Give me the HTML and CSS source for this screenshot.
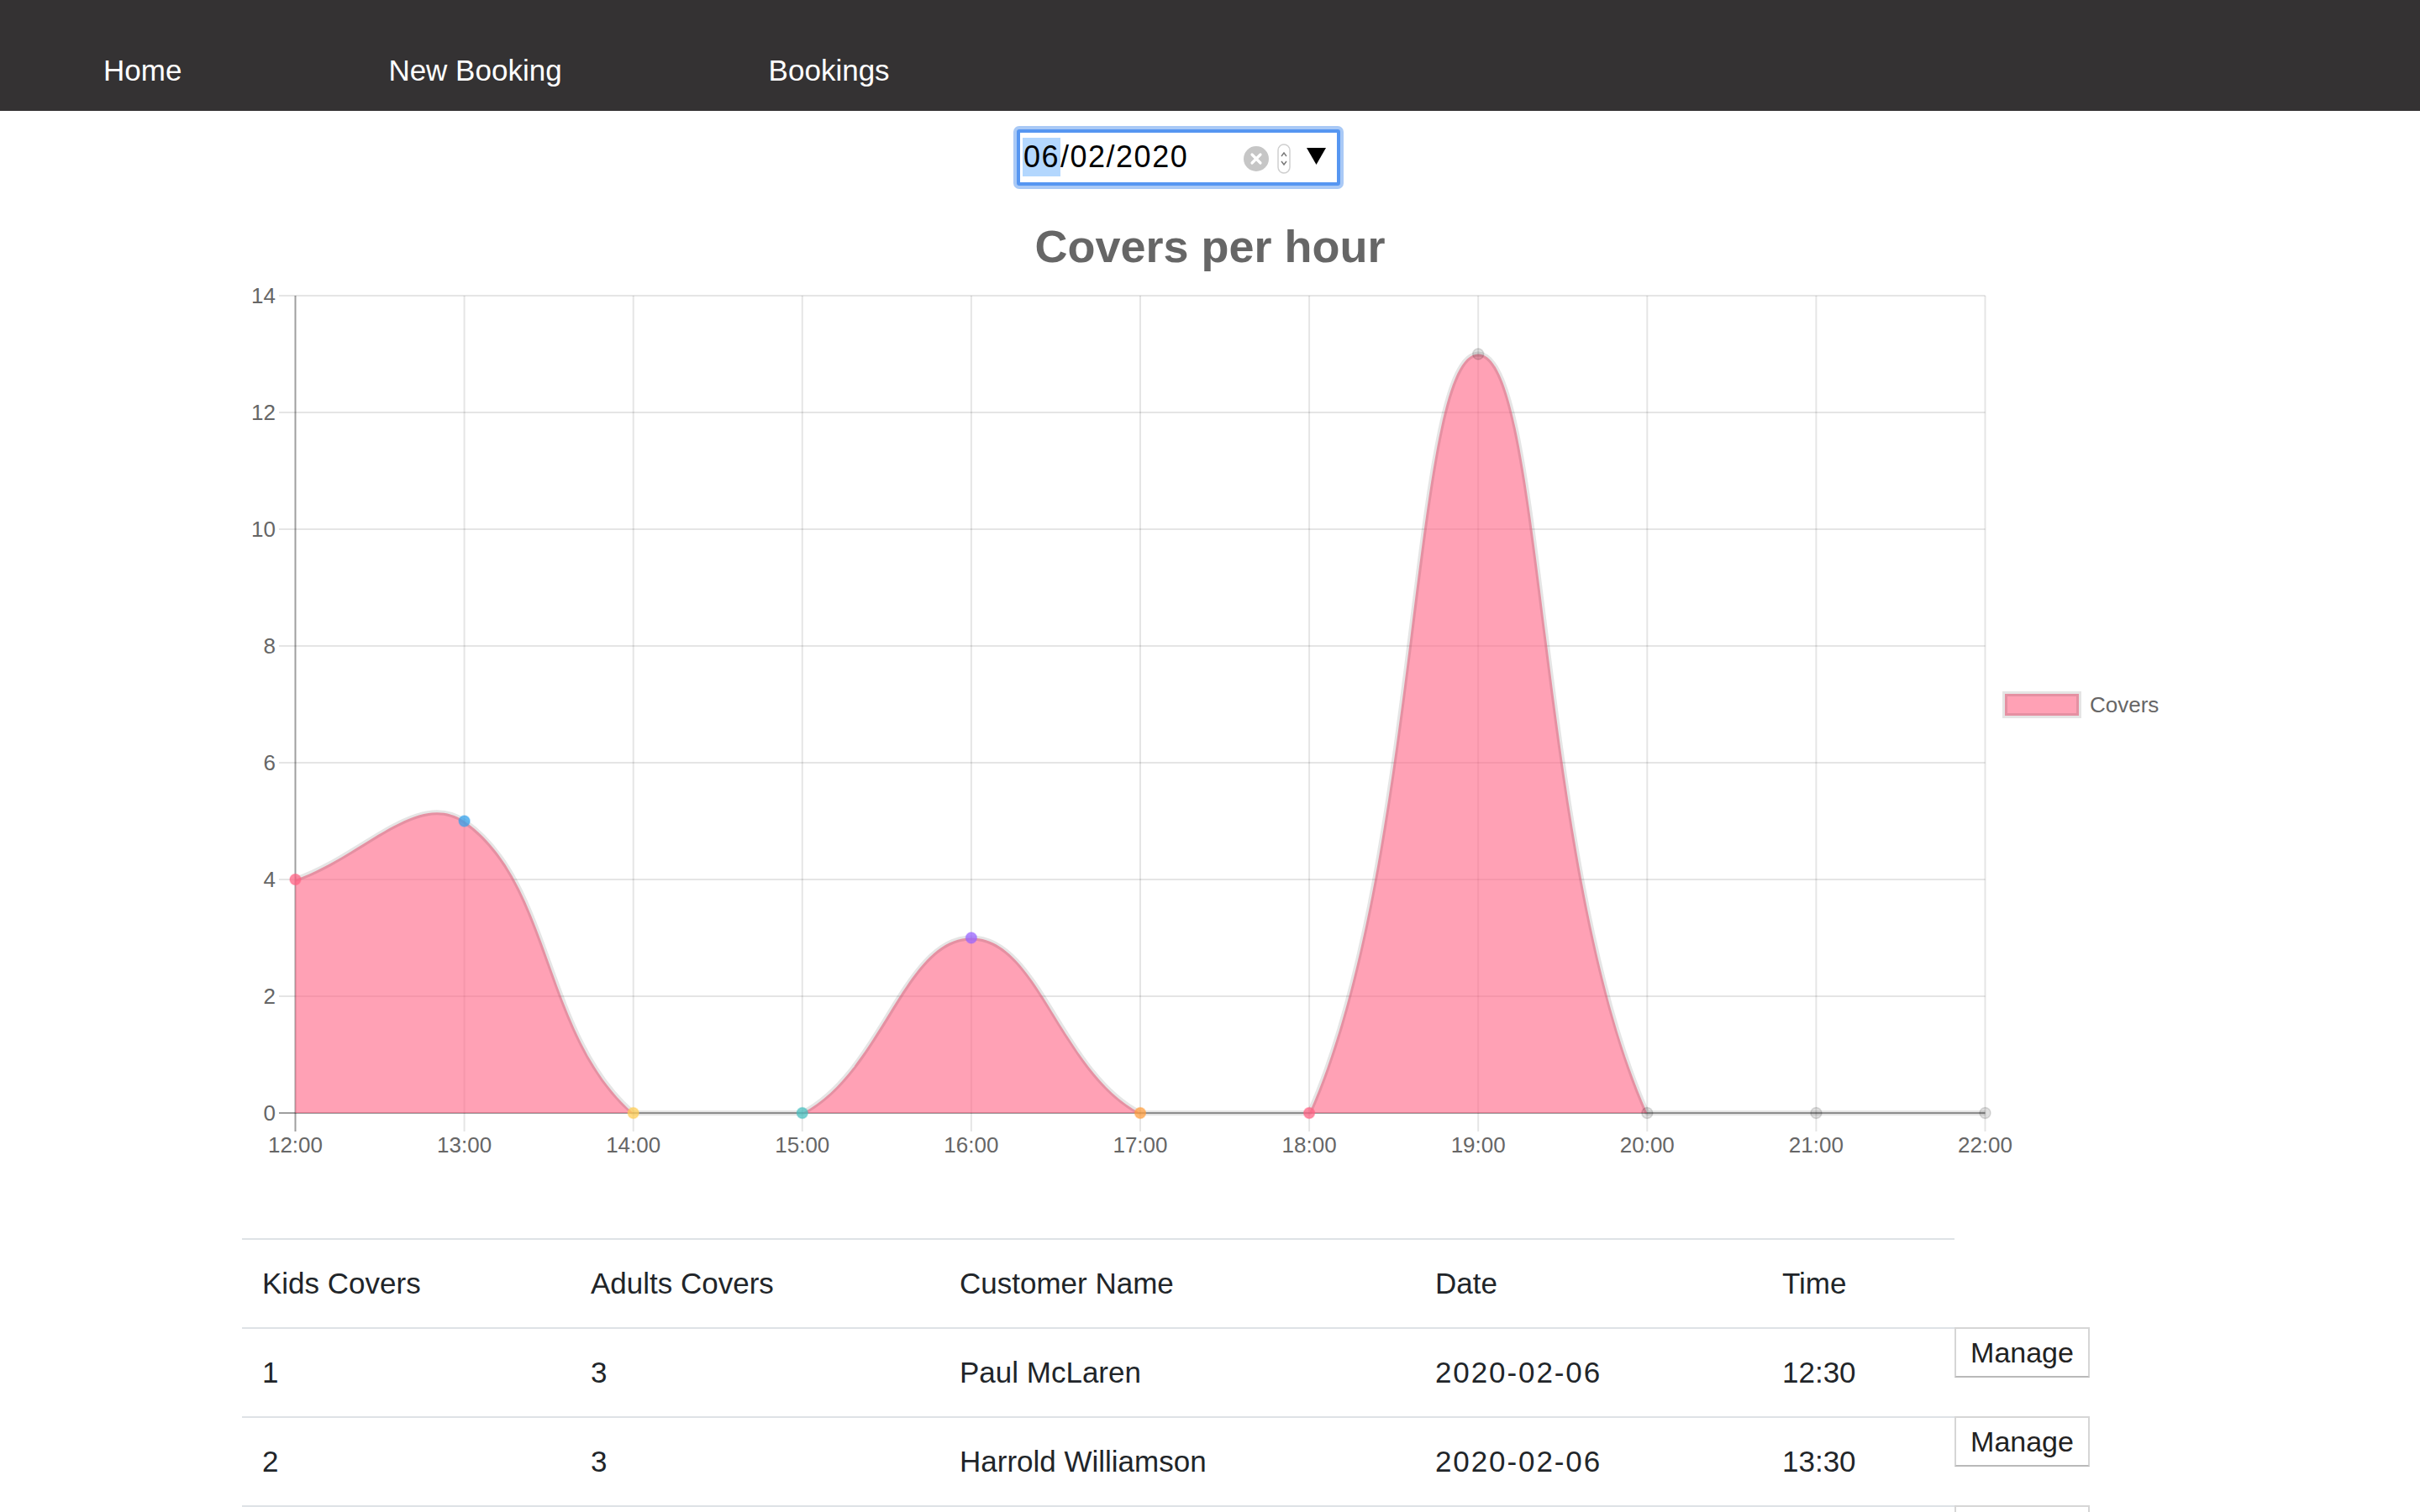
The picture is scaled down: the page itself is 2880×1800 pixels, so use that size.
FILE: index.html
```html
<!DOCTYPE html>
<html lang="en">
<head>
<meta charset="utf-8">
<title>Bookings</title>
<link rel="stylesheet" href="styles.css">
</head>
<body>
<nav class="nav">
  <a class="nav-link" href="#">Home</a>
  <a class="nav-link" href="#">New Booking</a>
  <a class="nav-link" href="#">Bookings</a>
</nav>

<div class="date-row">
  <div class="date-input">
    <span class="date-text"><span class="date-sel">06</span>/02/2020</span>
    <span class="date-controls">
      <svg class="clear-icon" width="30" height="30" viewBox="0 0 30 30">
        <circle cx="15" cy="15" r="15" fill="#c6c6c6"/>
        <path d="M10 10 L20 20 M20 10 L10 20" stroke="#fff" stroke-width="3.2" stroke-linecap="round"/>
      </svg>
      <svg class="spin-icon" width="16" height="36" viewBox="0 0 16 36">
        <rect x="1" y="1" width="14" height="34" rx="7" fill="#fff" stroke="#cfcfcf" stroke-width="1.5"/>
        <path d="M5 15 L8 11 L11 15 M5 21 L8 25 L11 21" fill="none" stroke="#777" stroke-width="1.4"/>
      </svg>
      <svg class="caret-icon" width="23" height="20" viewBox="0 0 23 20">
        <path d="M0 0 H23 L11.5 20 Z" fill="#000"/>
      </svg>
    </span>
  </div>
</div>

<div class="chart">
  <svg class="chart-svg" width="2304" height="1250" viewBox="0 0 2304 1250">
    <text class="chart-title" x="1152" y="88" text-anchor="middle">Covers per hour</text>
    <g class="grid">
      <line x1="44" x2="2074.5" y1="128" y2="128"/>
      <line x1="44" x2="2074.5" y1="267" y2="267"/>
      <line x1="44" x2="2074.5" y1="406" y2="406"/>
      <line x1="44" x2="2074.5" y1="545" y2="545"/>
      <line x1="44" x2="2074.5" y1="684" y2="684"/>
      <line x1="44" x2="2074.5" y1="823" y2="823"/>
      <line x1="44" x2="2074.5" y1="962" y2="962"/>
      <line x1="264.6" x2="264.6" y1="128" y2="1123"/>
      <line x1="465.7" x2="465.7" y1="128" y2="1123"/>
      <line x1="666.8" x2="666.8" y1="128" y2="1123"/>
      <line x1="867.9" x2="867.9" y1="128" y2="1123"/>
      <line x1="1069" x2="1069" y1="128" y2="1123"/>
      <line x1="1270.1" x2="1270.1" y1="128" y2="1123"/>
      <line x1="1471.2" x2="1471.2" y1="128" y2="1123"/>
      <line x1="1672.3" x2="1672.3" y1="128" y2="1123"/>
      <line x1="1873.4" x2="1873.4" y1="128" y2="1123"/>
      <line x1="2074.5" x2="2074.5" y1="128" y2="1123"/>
    </g>
    <line class="zero-line" x1="63.5" x2="63.5" y1="128" y2="1123"/>
    <line class="zero-line" x1="44" x2="2074.5" y1="1101" y2="1101"/>
    <path id="area" class="area" d=""/>
    <path id="line" class="line" d=""/>
    <g class="points">
      <circle class="pt pt-red" cx="63.5" cy="823" r="6.5"/>
      <circle class="pt pt-blue" cx="264.6" cy="753.5" r="6.5"/>
      <circle class="pt pt-yellow" cx="465.7" cy="1101" r="6.5"/>
      <circle class="pt pt-teal" cx="666.8" cy="1101" r="6.5"/>
      <circle class="pt pt-purple" cx="867.9" cy="892.5" r="6.5"/>
      <circle class="pt pt-orange" cx="1069" cy="1101" r="6.5"/>
      <circle class="pt pt-red" cx="1270.1" cy="1101" r="6.5"/>
      <circle class="pt pt-grey" cx="1471.2" cy="197.5" r="6.5"/>
      <circle class="pt pt-grey" cx="1672.3" cy="1101" r="6.5"/>
      <circle class="pt pt-grey" cx="1873.4" cy="1101" r="6.5"/>
      <circle class="pt pt-grey" cx="2074.5" cy="1101" r="6.5"/>
    </g>
    <g class="tick y-tick">
      <text x="40" y="137">14</text>
      <text x="40" y="276">12</text>
      <text x="40" y="415">10</text>
      <text x="40" y="554">8</text>
      <text x="40" y="693">6</text>
      <text x="40" y="832">4</text>
      <text x="40" y="971">2</text>
      <text x="40" y="1110">0</text>
    </g>
    <g class="tick x-tick">
      <text x="63.5" y="1148">12:00</text>
      <text x="264.6" y="1148">13:00</text>
      <text x="465.7" y="1148">14:00</text>
      <text x="666.8" y="1148">15:00</text>
      <text x="867.9" y="1148">16:00</text>
      <text x="1069" y="1148">17:00</text>
      <text x="1270.1" y="1148">18:00</text>
      <text x="1471.2" y="1148">19:00</text>
      <text x="1672.3" y="1148">20:00</text>
      <text x="1873.4" y="1148">21:00</text>
      <text x="2074.5" y="1148">22:00</text>
    </g>
    <rect class="legend-box" x="2098" y="602" width="88" height="26"/>
    <text class="tick legend-text" x="2199" y="624">Covers</text>
  </svg>
</div>

<table class="bookings">
  <thead>
    <tr>
      <th class="col-kids">Kids Covers</th>
      <th class="col-adults">Adults Covers</th>
      <th class="col-name">Customer Name</th>
      <th class="col-date">Date</th>
      <th class="col-time">Time</th>
    </tr>
  </thead>
  <tbody>
    <tr>
      <td>1</td>
      <td>3</td>
      <td>Paul McLaren</td>
      <td class="date-cell">2020-02-06</td>
      <td>12:30</td>
      <td class="action"><button class="manage" type="button">Manage</button></td>
    </tr>
    <tr>
      <td>2</td>
      <td>3</td>
      <td>Harrold Williamson</td>
      <td class="date-cell">2020-02-06</td>
      <td>13:30</td>
      <td class="action"><button class="manage" type="button">Manage</button></td>
    </tr>
    <tr>
      <td>&nbsp;</td>
      <td>&nbsp;</td>
      <td>&nbsp;</td>
      <td>&nbsp;</td>
      <td>&nbsp;</td>
      <td class="action"><button class="manage" type="button" aria-label="Manage"></button></td>
    </tr>
  </tbody>
</table>

<script src="script.js"></script>
</body>
</html>
```

FILE: styles.css
```css
html, body {
  margin: 0;
  padding: 0;
  background: #ffffff;
}

body {
  font-family: "Liberation Sans", Arial, sans-serif;
  color: #212529;
  overflow: hidden;
}

/* Navigation */
.nav {
  display: flex;
  height: 132px;
  background: #343233;
}

.nav-link {
  color: #ffffff;
  text-decoration: none;
  font-size: 35px;
  line-height: 35px;
  padding: 66px 123px 0 123px;
}

/* Date picker */
.date-row {
  display: flex;
  justify-content: center;
  padding: 22px 75px 0 0;
}

.date-input {
  box-sizing: border-box;
  width: 385px;
  height: 67px;
  display: flex;
  align-items: center;
  padding: 0 13px 0 3px;
  background: #ffffff;
  border: 4px solid #5696f1;
  border-radius: 3px;
  box-shadow: 0 0 0 4px #a9c9f6;
}

.date-text {
  font-size: 36px;
  letter-spacing: 1.5px;
  color: #000000;
  line-height: 46px;
  margin-top: -2px;
}

.date-sel {
  display: inline-block;
  background: #b3d7fe;
  padding: 0 1px;
}

.date-controls {
  margin-left: auto;
  display: flex;
  align-items: center;
}

.clear-icon {
  display: block;
  margin-right: 10px;
  margin-top: 2px;
}

.spin-icon {
  display: block;
  margin-right: 19px;
  margin-top: 2px;
}

.caret-icon {
  display: block;
  margin-top: -4px;
}

/* Chart */
.chart {
  margin: 3px 0 0 288px;
  width: 2304px;
  height: 1250px;
}

.chart-svg {
  display: block;
}

.chart-title {
  font-family: "Liberation Sans", Arial, sans-serif;
  font-weight: bold;
  font-size: 54px;
  fill: #666666;
}

.grid line {
  stroke: rgba(0, 0, 0, 0.1);
  stroke-width: 2;
}

.zero-line {
  stroke: rgba(0, 0, 0, 0.38);
  stroke-width: 2;
}

.area {
  fill: rgba(255, 99, 132, 0.6);
}

.line {
  fill: none;
  stroke: rgba(0, 0, 0, 0.1);
  stroke-width: 6;
  stroke-linejoin: round;
}

.pt {
  stroke-width: 1.5;
}
.pt-red { fill: rgba(255, 99, 132, 0.75); stroke: rgba(255, 99, 132, 0.4); }
.pt-blue { fill: rgba(54, 162, 235, 0.75); stroke: rgba(54, 162, 235, 0.4); }
.pt-yellow { fill: rgba(255, 206, 86, 0.75); stroke: rgba(255, 206, 86, 0.4); }
.pt-teal { fill: rgba(75, 192, 192, 0.75); stroke: rgba(75, 192, 192, 0.4); }
.pt-purple { fill: rgba(153, 102, 255, 0.75); stroke: rgba(153, 102, 255, 0.4); }
.pt-orange { fill: rgba(255, 159, 64, 0.75); stroke: rgba(255, 159, 64, 0.4); }
.pt-grey { fill: rgba(0, 0, 0, 0.12); stroke: rgba(0, 0, 0, 0.12); }

.tick {
  font-family: "Liberation Sans", Arial, sans-serif;
  font-size: 26px;
  fill: #666666;
}

.y-tick text {
  text-anchor: end;
}

.x-tick text {
  text-anchor: middle;
}

.legend-box {
  fill: rgba(255, 99, 132, 0.6);
  stroke: rgba(0, 0, 0, 0.1);
  stroke-width: 6;
}

/* Table */
.bookings {
  margin-left: 288px;
  border-collapse: separate;
  border-spacing: 0;
  font-size: 35px;
  color: #212529;
}

.bookings th,
.bookings td {
  text-align: left;
  font-weight: normal;
  padding: 26px 24px;
  line-height: 52px;
  border-top: 2px solid #dee2e6;
  white-space: nowrap;
  vertical-align: top;
}

.bookings td.date-cell {
  letter-spacing: 1.9px;
}

.col-kids { width: 343px; }
.col-adults { width: 391px; }
.col-name { width: 518px; }
.col-date { width: 365px; }
.col-time { width: 181px; }

.bookings td.action {
  padding: 0;
  border-top: none;
  vertical-align: top;
}

.manage {
  display: block;
  box-sizing: border-box;
  width: 161px;
  height: 60px;
  margin: 0;
  padding: 0;
  background: #ffffff;
  border: 2px solid #d6d6d6;
  border-bottom-color: #b9b9b9;
  border-radius: 0;
  font-family: "Liberation Sans", Arial, sans-serif;
  font-size: 34px;
  color: #222222;
}
```

FILE: script.js
```js
(function () {
  var data = [4, 5, 0, 0, 3, 0, 0, 13, 0, 0, 0];
  var x0 = 63.5, step = 201.1, y0 = 1101, unit = 69.5, top = 128;
  var left = x0, right = x0 + (data.length - 1) * step;
  var tension = 0.4;

  var pts = data.map(function (v, i) {
    return { x: x0 + i * step, y: y0 - v * unit };
  });

  function cap(v, a, b) { return Math.max(Math.min(v, b), a); }

  var cps = pts.map(function (p, i) {
    var prev = pts[i > 0 ? i - 1 : 0];
    var next = pts[i < pts.length - 1 ? i + 1 : pts.length - 1];
    var d01 = Math.sqrt(Math.pow(p.x - prev.x, 2) + Math.pow(p.y - prev.y, 2));
    var d12 = Math.sqrt(Math.pow(next.x - p.x, 2) + Math.pow(next.y - p.y, 2));
    var s01 = d01 / (d01 + d12);
    var s12 = d12 / (d01 + d12);
    if (isNaN(s01)) s01 = 0;
    if (isNaN(s12)) s12 = 0;
    var fa = tension * s01, fb = tension * s12;
    return {
      px: cap(p.x - fa * (next.x - prev.x), left, right),
      py: cap(p.y - fa * (next.y - prev.y), top, y0),
      nx: cap(p.x + fb * (next.x - prev.x), left, right),
      ny: cap(p.y + fb * (next.y - prev.y), top, y0)
    };
  });

  var d = 'M' + pts[0].x + ',' + pts[0].y;
  for (var i = 1; i < pts.length; i++) {
    d += ' C' + cps[i - 1].nx.toFixed(2) + ',' + cps[i - 1].ny.toFixed(2) + ' ' +
         cps[i].px.toFixed(2) + ',' + cps[i].py.toFixed(2) + ' ' +
         pts[i].x.toFixed(2) + ',' + pts[i].y.toFixed(2);
  }
  document.getElementById('line').setAttribute('d', d);
  document.getElementById('area').setAttribute('d',
    d + ' L' + pts[pts.length - 1].x + ',' + y0 + ' L' + pts[0].x + ',' + y0 + ' Z');
})();
```
